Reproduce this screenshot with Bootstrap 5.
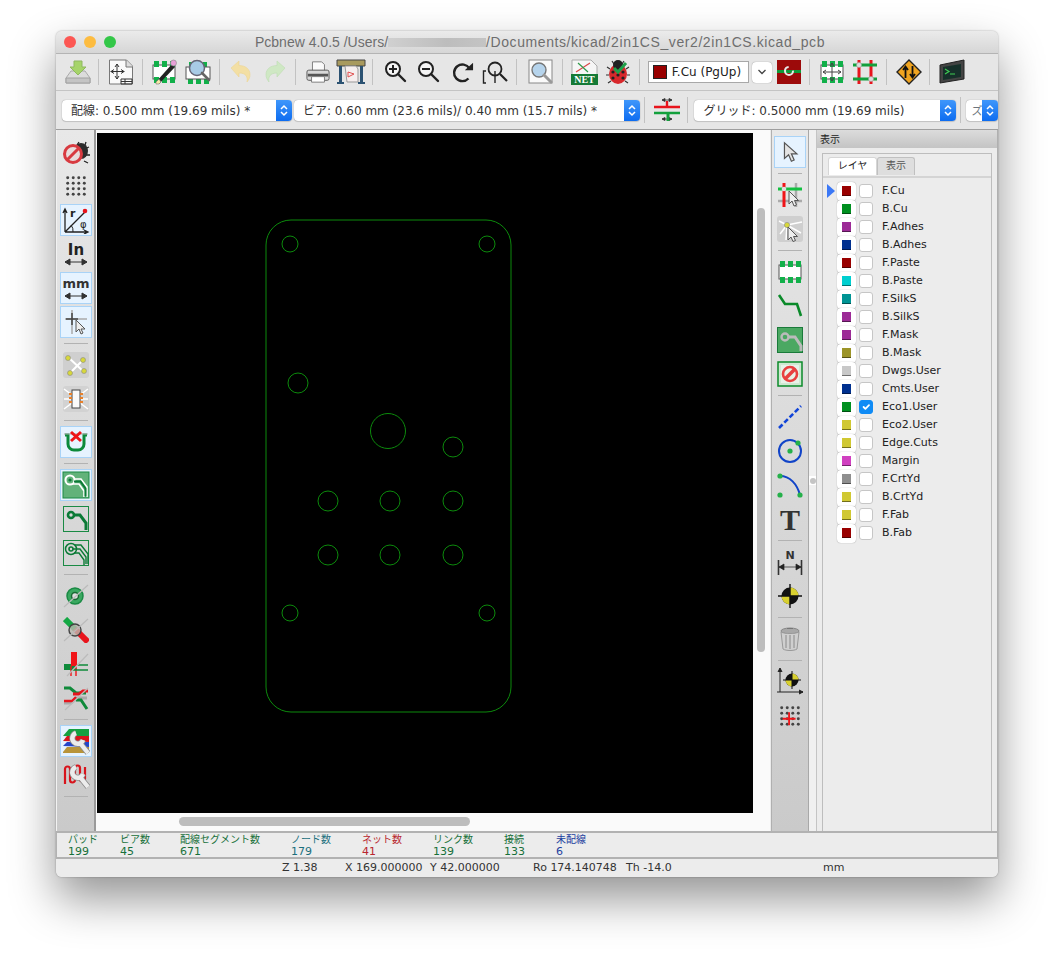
<!DOCTYPE html>
<html lang="ja">
<head>
  <meta charset="UTF-8" />
  <meta name="viewport" content="width=device-width, initial-scale=1.0"/>
  <title>Pcbnew</title>
  <link href="https://cdn.jsdelivr.net/npm/bootstrap@5.3.3/dist/css/bootstrap.min.css" rel="stylesheet">
  <style>
      body {
          background: #fff;
          font-family: "DejaVu Sans", "Noto Sans CJK JP", sans-serif;
          font-size: 11px;
          color: #222;
          min-height: 100vh;
          padding: 31px 0 0 56px;
      }
      .cjk { font-family: "Noto Sans CJK JP", sans-serif; }
      .mac-window {
          width: 942px;
          height: 846px;
          border-radius: 6px;
          overflow: hidden;
          background: #ececec;
          box-shadow: 0 22px 46px rgba(0,0,0,.42), 0 0 2px rgba(0,0,0,.35);
      }
      .titlebar {
          height: 23px;
          background: linear-gradient(#ebebeb, #d6d6d6);
          border-bottom: 1px solid #b4b4b4;
          padding-left: 8px;
      }
      .light { width: 12px; height: 12px; border-radius: 50%; margin-right: 8px; }
      .light-red { background: #fc5753; }
      .light-yellow { background: #fdbc40; }
      .light-green { background: #33c748; }
      .title-text {
          margin-left: 131px;
          padding-top: 1px;
          font-family: "Liberation Sans", sans-serif;
          font-size: 14px;
          color: #6e6e6e;
          white-space: nowrap;
      }
      .title-path { letter-spacing: .58px; }
      .blurred {
          display: inline-block;
          width: 98px; height: 9px;
          background: linear-gradient(90deg, #d0d0d0, #bdbdbd 60%, #c4c4c4);
      }
      .toolbar-main {
          height: 37px;
          background: #e6e6e6;
          border-bottom: 1px solid #c4c4c4;
          padding-left: 5px;
      }
      .toolbar-sub {
          height: 39px;
          background: #e6e6e6;
          border-bottom: 1px solid #9e9e9e;
          padding-left: 6px;
      }
      .tb { width: 33.4px; height: 32px; flex: none; }
      .tb-sep { width: 1px; height: 26px; background: #c2c2c2; margin: 0 5px 0 4px; flex: none; }
      .tb-sep.wide { margin-right: 8px; }
      .tb-sep-v { width: 24px; height: 1px; background: #b2b2b2; margin: 4px auto; flex: none; }
      .mac-select {
          height: 21px;
          background: #fff;
          border-radius: 4px;
          box-shadow: 0 0 1px rgba(0,0,0,.45), 0 1px 1px rgba(0,0,0,.12);
          font-size: 12px;
          color: #333;
          padding-left: 9px;
          flex: none;
          overflow: hidden;
      }
      .mac-select .stepper {
          width: 16px; height: 21px;
          background: linear-gradient(#3f97fb, #0d6cf0);
          flex: none;
      }
      .sel-track { width: 230px; }
      .sel-via { width: 346px; margin-left: 2px; }
      .sel-grid { width: 262px; margin-left: 1px; }
      .sel-zoom { width: 32px; padding-left: 5px; }
      .sel-zoom span:first-child { min-width: 0; overflow: hidden; white-space: nowrap; font-size: 11px; }
      .layer-combo {
          width: 101px; height: 22px;
          background: #fff;
          border: 1px solid #a8a8a8;
          padding-left: 4px;
          font-size: 12px;
          margin-left: 3px;
          flex: none;
          white-space: nowrap;
      }
      .layer-combo i { width: 14px; height: 14px; background: #990000; border: 1px solid #222; margin-right: 5px; flex: none; }
      .chev-btn {
          width: 20px; height: 21px;
          background: #fff;
          border-radius: 4px;
          box-shadow: 0 0 1px rgba(0,0,0,.5);
          margin-left: 3px;
          flex: none;
      }
      .main-area { height: 701px; }
      .side-tools {
          flex: none;
          padding-top: 5px;
          background: linear-gradient(#e8e8e8, #cacaca);
      }
      .side-left { width: 40px; border-right: 2px solid #9a9a9a; border-left: 1px solid #f2f2f2; }
      .side-right { width: 38px; border-left: 1px solid #b0b0b0; border-right: 1px solid #a8a8a8; margin-left: 1px; }
      .vb { height: 34px; flex: none; }
      .vb-on {
          width: 32px; height: 32px;
          background: #e6f3ff;
          border: 1px solid #a9d3f7;
      }
      .canvas-wrap { width: 674px; background: #fafafa; padding: 3px 0 0 1px; flex: none; }
      .canvas-row { height: 680px; }
      .pcb { width: 656px; height: 680px; background: #000; flex: none; }
      .vtrack { flex: 1; padding: 75px 0 0 4px; }
      .vthumb { width: 8px; height: 444px; background: #bdbdbd; border-radius: 4px; }
      .htrack { padding: 4px 0 0 82px; }
      .hthumb { width: 291px; height: 9px; background: #bdbdbd; border-radius: 5px; }
      .sash { width: 7px; background: #f0f0f0; flex: none; padding-top: 346px; }
      .sash span { width: 7px; height: 9px; background: #fff; }
      .sash i { width: 6px; height: 6px; border-radius: 50%; background: #c4c4c4; }
      .layer-panel { width: 182px; border-left: 1px solid #c4c4c4; border-right: 1px solid #b0b0b0; flex: none; }
      .panel-head {
          height: 18px;
          background: linear-gradient(#dcdcdc, #c4c4c4);
          padding-left: 3px;
          font-size: 10px;
          line-height: 18px;
      }
      .panel-box {
          margin: 5px 5px 0;
          border: 1px solid #bdbdbd;
          border-bottom: 0;
          height: 678px;
          background: #ececec;
      }
      .tabs-line { height: 24px; padding: 3px 0 0 5px; border-bottom: 2px solid #d4d4d4; }
      .panel-tab {
          width: 49px; height: 18px;
          background: #fff;
          border: 1px solid #d6d6d6;
          border-bottom: 0;
          border-radius: 3px 3px 0 0;
          font-size: 10px;
          text-align: center;
          line-height: 14px;
      }
      .panel-tab + .panel-tab { width: 38px; background: #dedede; border-color: #c0c0c0; color: #555; }
      .layer-list { padding: 4px 0 0 4px; }
      .layer-row { height: 18px; }
      .layer-arrow { width: 9px; flex: none; }
      .swatch-btn {
          width: 19px; height: 19px;
          background: #fff;
          border-radius: 4px;
          box-shadow: 0 0 1px rgba(0,0,0,.45);
          margin-left: 1px;
          flex: none;
      }
      .swatch-btn i { width: 9px; height: 10px; border-bottom: 1px solid rgba(0,0,0,.45); }
      .c-red { background: #990000; }
      .c-green { background: #009020; }
      .c-purple { background: #9c2a96; }
      .c-navy { background: #00308f; }
      .c-cyan { background: #00cfd0; }
      .c-teal { background: #009494; }
      .c-olive { background: #9c9428; }
      .c-silver { background: #c8c8c8; }
      .c-yellow { background: #d0c832; }
      .c-magenta { background: #d040c0; }
      .c-gray { background: #8f8f8f; }
      .layer-row .form-check-input {
          width: 14px; height: 14px;
          margin: 0 9px 0 3px;
          border-radius: 3px;
          border-color: #c6c6c6;
          flex: none;
      }
      .layer-row .form-check-input:checked { background-color: #0f8bf5; border-color: #0f8bf5; }
      .msg-panel {
          height: 28px;
          border-top: 2px solid #b2b2b2;
          border-bottom: 2px solid #b2b2b2;
          border-left: 1px solid #b2b2b2;
          border-right: 1px solid #b2b2b2;
          background: #ececec;
          padding-left: 11px;
      }
      .msg-label { font-size: 10px; line-height: 12px; height: 12px; display: block; }
      .msg-val { font-size: 11px; line-height: 12px; height: 12px; margin-top: 1px; display: block; }
      .m-green { color: #17703a; }
      .m-teal { color: #1b6f7d; }
      .m-red { color: #b8262f; }
      .m-blue { color: #1d3f9f; }
      .w1 { width: 52px; } .w2 { width: 60px; } .w3 { width: 111px; } .w4 { width: 71px; }
      .w5 { width: 71px; } .w6 { width: 71px; } .w7 { width: 52px; }
      .status-bar { height: 18px; background: #ececec; line-height: 17px; color: #333; white-space: nowrap; }
      .s1 { margin-left: 226px; width: 63px; } .s2 { width: 85px; } .s3 { width: 103px; }
      .s4 { width: 93px; } .s5 { width: 197px; }
  </style>
</head>
<body>

  <svg width="0" height="0" class="d-block position-absolute">
    <defs>
      <symbol id="mag" viewBox="0 0 26 26"><circle cx="11" cy="10" r="7" fill="#fff" fill-opacity=".6" stroke="#222" stroke-width="2"/><path d="M16 15l7 7" stroke="#222" stroke-width="2.4" stroke-linecap="round"/></symbol>
      <symbol id="foot" viewBox="0 0 26 26"><rect x="2" y="6" width="22" height="14" fill="#fff" stroke="#555"/><path fill="#12b04a" d="M3 2h5v6H3zM11 2h5v6h-5zM19 2h5v6h-5zM3 18h5v6H3zM11 18h5v6h-5zM19 18h5v6h-5z"/></symbol>
      <symbol id="dots" viewBox="0 0 26 26"><g fill="#444"><circle cx="4" cy="4" r="1.6"/><circle cx="10" cy="4" r="1.6"/><circle cx="16" cy="4" r="1.6"/><circle cx="22" cy="4" r="1.6"/><circle cx="4" cy="10" r="1.6"/><circle cx="10" cy="10" r="1.6"/><circle cx="16" cy="10" r="1.6"/><circle cx="22" cy="10" r="1.6"/><circle cx="4" cy="16" r="1.6"/><circle cx="10" cy="16" r="1.6"/><circle cx="16" cy="16" r="1.6"/><circle cx="22" cy="16" r="1.6"/><circle cx="4" cy="22" r="1.6"/><circle cx="10" cy="22" r="1.6"/><circle cx="16" cy="22" r="1.6"/><circle cx="22" cy="22" r="1.6"/></g></symbol>
      <symbol id="arrow" viewBox="0 0 26 26"><path d="M7 3v17l4.500-4 3 7 3-1.300-3-6.700h6z" fill="#e4e4e4" stroke="#555" stroke-width="1.300"/></symbol>
      <symbol id="stepper" viewBox="0 0 16 21"><path d="M5 9l3-3 3 3M5 12l3 3 3-3" fill="none" stroke="#fff" stroke-width="1.500"/></symbol>
      <symbol id="ladybug" viewBox="0 0 26 26"><g stroke="#333" stroke-width="1.200"><path d="M5 10l-3-2M4 16H1M6 22l-3 2M21 10l3-2M22 16h3M20 22l3 2M9 5L7 2M17 5l2-3"/></g><ellipse cx="13" cy="15" rx="9" ry="10" fill="#d8282c"/><circle cx="13" cy="6" r="5" fill="#222"/><g fill="#222"><circle cx="8" cy="13" r="1.600"/><circle cx="18" cy="13" r="1.600"/><circle cx="8" cy="19" r="1.600"/><circle cx="18" cy="19" r="1.600"/><circle cx="13" cy="16" r="1.600"/></g></symbol>
      <symbol id="wrench" viewBox="0 0 28 28"><g fill="none"><path d="M14 6a5.500 5.500 0 1 0 7 7M18 16l8 10" stroke="#8c8c8c" stroke-width="6"/><path d="M14 6a5.500 5.500 0 1 0 7 7M18 16l8 10" stroke="#ececec" stroke-width="4.400"/></g></symbol>
    </defs>
  </svg>

  <div class="mac-window d-flex flex-column">

    <!-- title -->
    <div class="titlebar d-flex align-items-center">
      <span class="light light-red"></span>
      <span class="light light-yellow"></span>
      <span class="light light-green"></span>
      <span class="title-text">Pcbnew 4.0.5 /Users/<span class="blurred"></span><span class="title-path">/Documents/kicad/2in1CS_ver2/2in1CS.kicad_pcb</span></span>
    </div>

    <!-- main toolbar -->
    <div class="toolbar-main d-flex align-items-center">
      <div class="tb d-flex align-items-center justify-content-center"><svg width="26" height="26" viewBox="0 0 26 26"><path d="M6 12h14l5 7v5H1v-5z" fill="#dcdcdc" stroke="#aaa"/><path d="M1 19h24v5H1z" fill="#c4c4c4" stroke="#a0a0a0"/><path d="M9 2h8v6h4l-8 8-8-8h4z" fill="#a6d46a" stroke="#8fb860"/></svg></div>
      <div class="tb-sep"></div>
      <div class="tb d-flex align-items-center justify-content-center"><svg width="26" height="26" viewBox="0 0 26 26"><path d="M1.500 1h17l6 6v18h-23z" fill="#fafafa" stroke="#777"/><path d="M18 1v7h7" fill="#ddd" stroke="#777"/><path d="M9 5v15M2.500 12.500h14M9 5l-2 3M9 5l2 3M9 20l-2-3M9 20l2-3M3 12.500l3-2M3 12.500l3 2M16 12.500l-3-2M16 12.500l-3 2" stroke="#333" fill="none"/><path d="M13 20h11v5H13zM13 22.500h11M17 20v5" fill="none" stroke="#333"/></svg></div>
      <div class="tb-sep"></div>
      <div class="tb d-flex align-items-center justify-content-center"><svg width="26" height="26" viewBox="0 0 26 26"><use href="#foot"/><path d="M5 23L21 5l3 3L8 25H5z" fill="#222"/><path d="M5 23l3-3 2 3-2 2H5z" fill="#f5e9a8" stroke="#777" stroke-width=".6"/><circle cx="22.500" cy="4" r="3" fill="#e8a0d8" stroke="#888" stroke-width=".6"/></svg></div>
      <div class="tb d-flex align-items-center justify-content-center"><svg width="26" height="26" viewBox="0 0 26 26"><path fill="#12b04a" d="M4 3h4v5H4zM18 3h4v5h-4zM3 19h5v6H3zM11 19h5v6h-5zM19 19h5v6h-5z"/><rect x="1" y="8" width="24" height="12" fill="#fff" stroke="#555"/><circle cx="12" cy="9" r="7.500" fill="#a8cbe6" stroke="#667" stroke-width="1.500"/><path d="M17 14l7 7" stroke="#666" stroke-width="2.600" stroke-linecap="round"/></svg></div>
      <div class="tb-sep"></div>
      <div class="tb d-flex align-items-center justify-content-center"><svg width="26" height="26" viewBox="0 0 26 26"><path d="M3 9l8-7v4.500c7 0 11 4 11 9 0 3-1 5-3 7.500 1-5-1-9-8-9V18z" fill="#f3dfa4" stroke="#ecd592" stroke-width=".6"/></svg></div>
      <div class="tb d-flex align-items-center justify-content-center"><svg width="26" height="26" viewBox="0 0 26 26"><path d="M23 9l-8-7v4.500c-7 0-11 4-11 9 0 3 1 5 3 7.500-1-5 1-9 8-9V18z" fill="#cfe8c4" stroke="#bedcb2" stroke-width=".6"/></svg></div>
      <div class="tb-sep"></div>
      <div class="tb d-flex align-items-center justify-content-center"><svg width="24" height="24" viewBox="0 0 26 26"><path d="M7 2h10l3 3v7H7z" fill="#fafafa" stroke="#777"/><path d="M3 11h20a2 2 0 0 1 2 2v7a2 2 0 0 1-2 2H3a2 2 0 0 1-2-2v-7a2 2 0 0 1 2-2z" fill="#d8d8d8" stroke="#555"/><path d="M2 15h22v3H2z" fill="#555"/><path d="M6 18h14v6H6z" fill="#fff" stroke="#777"/></svg></div>
      <div class="tb d-flex align-items-center justify-content-center"><svg width="30" height="26" viewBox="0 0 30 26"><path d="M1 1h28v6H1z" fill="#a89a5e" stroke="#444"/><path d="M3 7h3v16H3zM24 7h3v16h-3zM1 23h7v2H1zM22 23h7v2h-7z" fill="#2b5272"/><path d="M9 7h11l2 3v13H11z" fill="#f6eeee" stroke="#999"/><path d="M12 13l6 2-6 3z" fill="none" stroke="#e05050"/></svg></div>
      <div class="tb-sep"></div>
      <div class="tb d-flex align-items-center justify-content-center"><svg width="26" height="26" viewBox="0 0 26 26"><use href="#mag"/><path d="M7 10h8M11 6v8" stroke="#222" stroke-width="2"/></svg></div>
      <div class="tb d-flex align-items-center justify-content-center"><svg width="26" height="26" viewBox="0 0 26 26"><use href="#mag"/><path d="M7 10h8" stroke="#222" stroke-width="2"/></svg></div>
      <div class="tb d-flex align-items-center justify-content-center"><svg width="24" height="24" viewBox="0 0 26 26"><path d="M20 20a9 9 0 1 1 1-11" fill="none" stroke="#222" stroke-width="2.600"/><path d="M16 11h9V3z" fill="#222"/></svg></div>
      <div class="tb d-flex align-items-center justify-content-center"><svg width="26" height="26" viewBox="0 0 26 26"><circle cx="13" cy="10" r="6.500" fill="none" stroke="#222" stroke-width="1.800"/><path d="M18 15l7 7" stroke="#222" stroke-width="2.200"/><path d="M4 12H1.500v12H4M13 12v12" fill="none" stroke="#222" stroke-width="1.400"/></svg></div>
      <div class="tb-sep wide"></div>
      <div class="tb d-flex align-items-center justify-content-center"><svg width="26" height="26" viewBox="0 0 26 26"><rect x="1" y="1" width="23" height="23" fill="#fafafa" stroke="#888"/><circle cx="11" cy="11" r="7" fill="#b6d4ec" stroke="#777" stroke-width="1.400"/><path d="M16 16l7 7" stroke="#999" stroke-width="3" stroke-linecap="round"/></svg></div>
      <div class="tb-sep"></div>
      <div class="tb d-flex align-items-center justify-content-center"><svg width="27" height="26" viewBox="0 0 27 26"><path d="M1 1h19l6 6v9H1z" fill="#f6f6f6" stroke="#aaa"/><path d="M5 13L19 4" stroke="#d84848" stroke-width="1.200"/><path d="M7 4l10 9" stroke="#2f9a4a" stroke-width="1.200"/><rect y="15" width="27" height="11" fill="#157a36"/><text x="13.500" y="24" font-family="Liberation Serif, serif" font-weight="700" font-size="10" fill="#fff" text-anchor="middle">NET</text></svg></div>
      <div class="tb d-flex align-items-center justify-content-center"><svg width="26" height="26" viewBox="0 0 26 26"><use href="#ladybug"/><path d="M9 9l4 4 8-9" fill="none" stroke="#1fa04a" stroke-width="3"/></svg></div>
      <div class="tb-sep"></div>
      <div class="layer-combo d-flex align-items-center"><i></i>F.Cu (PgUp)</div>
      <div class="chev-btn d-flex align-items-center justify-content-center"><svg width="10" height="8" viewBox="0 0 10 8"><path d="M1.500 2l3.500 3.500L8.500 2" fill="none" stroke="#444" stroke-width="1.300"/></svg></div>
      <div class="tb d-flex align-items-center justify-content-center"><svg width="24" height="24" viewBox="0 0 24 24"><rect width="24" height="24" fill="#9c0a0a"/><path d="M0 10h24v3H0z" fill="#0f9a3a"/><circle cx="12" cy="11" r="4" fill="none" stroke="#e8e8e8" stroke-width="2" stroke-dasharray="18 6"/></svg></div>
      <div class="tb-sep"></div>
      <div class="tb d-flex align-items-center justify-content-center"><svg width="26" height="26" viewBox="0 0 26 26"><use href="#foot"/><path d="M4 13h18M13 4v18M4 13l3-2M4 13l3 2M22 13l-3-2M22 13l-3 2M13 4l-2 3M13 4l2 3M13 22l-2-3M13 22l2-3" stroke="#444" fill="none"/></svg></div>
      <div class="tb d-flex align-items-center justify-content-center"><svg width="26" height="26" viewBox="0 0 26 26"><path d="M7 1v24M19 1v24" stroke="#e8141c" stroke-width="3"/><path d="M1 6h24M1 20h24" stroke="#13a03c" stroke-width="3"/><circle cx="7" cy="6" r="2.500" fill="#ddd" stroke="#999" stroke-width=".5"/><circle cx="19" cy="20" r="2.500" fill="#ddd" stroke="#999" stroke-width=".5"/></svg></div>
      <div class="tb-sep"></div>
      <div class="tb d-flex align-items-center justify-content-center"><svg width="26" height="26" viewBox="0 0 26 26"><path d="M13 1l12 12-12 12L1 13z" fill="#f0a420" stroke="#222" stroke-width="1.400"/><path d="M9.500 19V9M7 11l2.500-3.500L12 11M16.500 7v10M14 15l2.500 3.500L19 15" fill="none" stroke="#111" stroke-width="1.800"/></svg></div>
      <div class="tb-sep"></div>
      <div class="tb d-flex align-items-center justify-content-center"><svg width="26" height="26" viewBox="0 0 26 26"><path d="M1 6l24-5v19L1 24z" fill="#444" stroke="#222"/><path d="M4 8l18-3v13L4 21z" fill="#16302a"/><path d="M6 10l4 2.500L6 15" fill="none" stroke="#3ecb52" stroke-width="1.200"/><path d="M11 15h5" stroke="#3ecb52" stroke-width="1.200"/></svg></div>
    </div>

    <!-- sub toolbar -->
    <div class="toolbar-sub d-flex align-items-center">
      <div class="mac-select sel-track d-flex align-items-center justify-content-between"><span><span class="cjk">配線</span>: 0.500 mm (19.69 mils) *</span><span class="stepper d-flex"><svg width="16" height="21"><use href="#stepper"/></svg></span></div>
      <div class="mac-select sel-via d-flex align-items-center justify-content-between"><span><span class="cjk">ビア</span>: 0.60 mm (23.6 mils)/ 0.40 mm (15.7 mils) *</span><span class="stepper d-flex"><svg width="16" height="21"><use href="#stepper"/></svg></span></div>
      <div class="tb-sep ms-1"></div>
      <div class="tb d-flex align-items-center justify-content-center"><svg width="26" height="26" viewBox="0 0 26 26"><path d="M8 3h10M8 3l3-1.500v3zM18 3l-3-1.500v3zM8 22h10M8 22l3-1.500v3zM18 22l-3-1.500v3z" fill="#333" stroke="#333" stroke-width=".8"/><path d="M0 10h26" stroke="#e8141c" stroke-width="2.400"/><path d="M13 10V4" stroke="#e8141c" stroke-width="2.400"/><path d="M0 16h26" stroke="#13a03c" stroke-width="2.400"/><path d="M14 16v8" stroke="#13a03c" stroke-width="3"/></svg></div>
      <div class="tb-sep"></div>
      <div class="mac-select sel-grid d-flex align-items-center justify-content-between"><span><span class="cjk">グリッド</span>: 0.5000 mm (19.69 mils)</span><span class="stepper d-flex"><svg width="16" height="21"><use href="#stepper"/></svg></span></div>
      <div class="tb-sep ms-1"></div>
      <div class="mac-select sel-zoom d-flex align-items-center justify-content-between"><span class="cjk text-secondary">ズ</span><span class="stepper d-flex"><svg width="16" height="21"><use href="#stepper"/></svg></span></div>
    </div>

    <div class="main-area d-flex">
      <!-- left tools -->
      <div class="side-tools side-left d-flex flex-column align-items-center">
        <div class="vb d-flex align-items-center justify-content-center"><svg width="28" height="26" viewBox="0 0 28 26"><g stroke="#222" stroke-width="1.300"><path d="M17 3l-2 3M24 3l-1 3M22 10l5-2M24 16h4M22 22l4 2"/></g><ellipse cx="19" cy="12" rx="7" ry="8" fill="#2b2b2b"/><circle cx="11" cy="15" r="8.500" fill="#e8dcdc" stroke="#d83a40" stroke-width="3"/><path d="M5 21L17 9" stroke="#d83a40" stroke-width="3"/></svg></div>
        <div class="vb d-flex align-items-center justify-content-center"><svg width="24" height="24"><use href="#dots"/></svg></div>
        <div class="vb d-flex align-items-center justify-content-center"><div class="vb-on d-flex align-items-center justify-content-center"><svg width="28" height="28" viewBox="0 0 28 28"><path d="M3 26V4M1 7l2-4 2 4M3 26h22M22 24l4 2-4 2M3 26L23 6" fill="none" stroke="#222" stroke-width="1.300"/><circle cx="23" cy="5" r="2.300" fill="#e8141c"/><path d="M11 26a9 9 0 0 0-2-7" fill="none" stroke="#222"/><text x="8" y="11" font-family="DejaVu Sans, sans-serif" font-weight="700" font-size="11" fill="#222">r</text><text x="18" y="22" font-family="DejaVu Sans, sans-serif" font-size="10" fill="#222">φ</text></svg></div></div>
        <div class="vb d-flex align-items-center justify-content-center"><svg width="26" height="28" viewBox="0 0 26 28"><text x="13" y="15" font-family="DejaVu Sans, sans-serif" font-weight="700" font-size="15" fill="#222" text-anchor="middle">In</text><path d="M2 22h22M2 22l5-3v6zM24 22l-5-3v6z" fill="#333" stroke="#333"/></svg></div>
        <div class="vb d-flex align-items-center justify-content-center"><div class="vb-on d-flex align-items-center justify-content-center"><svg width="28" height="28" viewBox="0 0 28 28"><text x="14" y="14" font-family="DejaVu Sans, sans-serif" font-weight="700" font-size="13" fill="#333" text-anchor="middle">mm</text><path d="M3 22h22M3 22l5-3v6zM25 22l-5-3v6z" fill="#333" stroke="#333"/></svg></div></div>
        <div class="vb d-flex align-items-center justify-content-center"><div class="vb-on d-flex align-items-center justify-content-center"><svg width="26" height="26" viewBox="0 0 26 26"><path d="M2 10h22M9 1v24" stroke="#aaa" stroke-width="1.500"/><path d="M3 10h12M9 4v12" stroke="#444" stroke-width="1.500"/><path d="M13 11v12l3-3 2 5 2-1-2-4h4z" fill="#eee" stroke="#555"/></svg></div></div>
        <div class="tb-sep-v"></div>
        <div class="vb d-flex align-items-center justify-content-center"><svg width="26" height="26" viewBox="0 0 26 26"><rect width="26" height="26" rx="3" fill="#cfcfcf"/><path d="M5 5l16 15M21 7L7 21" stroke="#fff" stroke-width="2"/><g fill="#d8d83a" stroke="#888" stroke-width=".6"><circle cx="5" cy="6" r="2.500"/><circle cx="20" cy="8" r="2.500"/><circle cx="7" cy="21" r="2.500"/><circle cx="21" cy="19" r="2.500"/></g></svg></div>
        <div class="vb d-flex align-items-center justify-content-center"><svg width="26" height="26" viewBox="0 0 26 26"><rect width="26" height="26" rx="3" fill="#d2d2d2"/><path d="M1 3l8 6M25 3l-8 6M1 23l8-6M25 23l-8-6M1 13h7M18 13h7" stroke="#fff" stroke-width="1.500"/><rect x="9" y="4" width="8" height="18" fill="#fafafa" stroke="#444"/><path fill="#e8802a" d="M6 7h3v2H6zM6 11h3v2H6zM6 15h3v2H6zM17 7h3v2h-3zM17 11h3v2h-3zM17 15h3v2h-3z"/></svg></div>
        <div class="tb-sep-v"></div>
        <div class="vb d-flex align-items-center justify-content-center"><div class="vb-on d-flex align-items-center justify-content-center"><svg width="26" height="26" viewBox="0 0 26 26"><path d="M2 6h3v9a6 6 0 0 0 6 6h4a6 6 0 0 0 6-6V6h3" fill="none" stroke="#0b8a3a" stroke-width="3"/><path d="M1 5h24" stroke="#aaa"/><path d="M8 3l10 9M18 3L8 12" stroke="#ee1418" stroke-width="3"/></svg></div></div>
        <div class="tb-sep-v"></div>
        <div class="vb d-flex align-items-center justify-content-center"><div class="vb-on d-flex align-items-center justify-content-center"><svg width="28" height="28" viewBox="0 0 28 28"><rect x="1" y="1" width="26" height="26" fill="#62b27a" stroke="#1a8a44"/><circle cx="8" cy="9" r="4.500" fill="none" stroke="#fff" stroke-width="2"/><path d="M12 8h7l6 8v10M10 13h7l5 7v6" fill="none" stroke="#fff" stroke-width="1.600"/><circle cx="8" cy="9" r="1.600" fill="#0b7a36"/><path d="M12 10.500h6.500l5 7v8" fill="none" stroke="#0b7a36" stroke-width="2"/></svg></div></div>
        <div class="vb d-flex align-items-center justify-content-center"><svg width="26" height="26" viewBox="0 0 26 26"><rect x=".5" y=".5" width="25" height="25" fill="none" stroke="#1a8a44"/><circle cx="8" cy="9" r="3" fill="none" stroke="#0b7a36" stroke-width="2.600"/><path d="M11 9h6l6 8v7" fill="none" stroke="#0b7a36" stroke-width="3"/></svg></div>
        <div class="vb d-flex align-items-center justify-content-center"><svg width="26" height="26" viewBox="0 0 26 26"><rect x=".5" y=".5" width="25" height="25" fill="none" stroke="#1a8a44"/><circle cx="8" cy="9" r="5.500" fill="none" stroke="#0b7a36" stroke-width="1.500"/><circle cx="8" cy="9" r="2" fill="none" stroke="#0b7a36" stroke-width="1.600"/><path d="M12 5h6l7 9v10M11 13h5l5 7v5M10 9h7l6 8v7" fill="none" stroke="#0b7a36" stroke-width="1.400"/></svg></div>
        <div class="tb-sep-v"></div>
        <div class="vb d-flex align-items-center justify-content-center"><svg width="26" height="26" viewBox="0 0 26 26"><circle cx="12" cy="13" r="8" fill="#3aa860" stroke="#1a8a44" stroke-width="1.500"/><circle cx="12" cy="13" r="3.500" fill="#ddd" stroke="#1a6a34" stroke-width="1.500"/><path d="M1 24L25 2" stroke="#bbb" stroke-width="1.200"/></svg></div>
        <div class="vb d-flex align-items-center justify-content-center"><svg width="26" height="26" viewBox="0 0 26 26"><path d="M2 2l10 10" stroke="#14a844" stroke-width="6"/><path d="M12 12l13 13" stroke="#e8141c" stroke-width="6"/><circle cx="12" cy="13" r="6" fill="#bcb8b0" fill-opacity=".8" stroke="#444" stroke-width="1.400"/><path d="M1 24L25 2" stroke="#bbb" stroke-width="1.200"/></svg></div>
        <div class="vb d-flex align-items-center justify-content-center"><svg width="26" height="26" viewBox="0 0 26 26"><path d="M8 1h6v12H1v6h13" fill="#0f8a3a"/><path d="M8 1h6v14H8z" fill="#f01418"/><path d="M1 13h7v6H1z" fill="#0f8a3a"/><path d="M8 15v10M13 15v10" stroke="#f01418" stroke-width="1.400"/><path d="M14 14h11M8 19h17" stroke="#0f8a3a" stroke-width="1.400"/><path d="M4 25L25 3" stroke="#bbb" stroke-width="1.200"/></svg></div>
        <div class="vb d-flex align-items-center justify-content-center"><svg width="26" height="26" viewBox="0 0 26 26"><path d="M1 3h6l6 5h10" fill="none" stroke="#0f8a3a" stroke-width="3"/><path d="M10 9h6l4-3h5" fill="none" stroke="#e8141c" stroke-width="3"/><path d="M1 18h7l6-5h10" fill="none" stroke="#aaa" stroke-width="3"/><path d="M1 16h8l4-4" fill="none" stroke="#e8141c" stroke-width="2.400"/><path d="M13 15h5l6 9" fill="none" stroke="#0f8a3a" stroke-width="3"/><path d="M2 25L25 3" stroke="#bbb" stroke-width="1.200"/></svg></div>
        <div class="tb-sep-v"></div>
        <div class="vb d-flex align-items-center justify-content-center"><div class="vb-on d-flex align-items-center justify-content-center"><svg width="28" height="28" viewBox="0 0 28 28"><path d="M1 9L7 2h20v8z" fill="#14a040"/><path d="M1 14l4-5h22v6z" fill="#d8141c"/><path d="M1 19l4-4h22v5z" fill="#2446c8"/><path d="M1 25l4-5h22v6H1z" fill="#b8943a"/><use href="#wrench" width="28" height="28"/></svg></div></div>
        <div class="vb d-flex align-items-center justify-content-center"><svg width="28" height="28" viewBox="0 0 28 28"><path d="M3 23V8a2.500 2.500 0 0 1 5 0v11a2.500 2.500 0 0 0 5 0V7a2.500 2.500 0 0 1 5 0v11a2.500 2.500 0 0 0 5 0V6" fill="none" stroke="#d8141c" stroke-width="2.200"/><use href="#wrench" width="28" height="28"/></svg></div>
        <div class="tb-sep-v"></div>
      </div>

      <!-- canvas -->
      <div class="canvas-wrap">
        <div class="canvas-row d-flex">
          <div class="pcb">
            <svg width="656" height="680" viewBox="97 133 656 680" class="d-block">
              <g fill="none" stroke="#0c8a0c" stroke-width="1">
                <rect x="266" y="220" width="245" height="492" rx="25"/>
                <circle cx="290" cy="244" r="8"/>
                <circle cx="487" cy="244" r="8"/>
                <circle cx="298" cy="383" r="10"/>
                <circle cx="388" cy="431" r="17.500"/>
                <circle cx="453" cy="447" r="10"/>
                <circle cx="328" cy="501" r="10"/>
                <circle cx="390" cy="501" r="10"/>
                <circle cx="453" cy="501" r="10"/>
                <circle cx="328" cy="555" r="10"/>
                <circle cx="390" cy="555" r="10"/>
                <circle cx="453" cy="555" r="10"/>
                <circle cx="290" cy="613" r="8"/>
                <circle cx="487" cy="613" r="8"/>
              </g>
            </svg>
          </div>
          <div class="vtrack"><div class="vthumb"></div></div>
        </div>
        <div class="htrack"><div class="hthumb"></div></div>
      </div>

      <!-- right tools -->
      <div class="side-tools side-right d-flex flex-column align-items-center">
        <div class="vb d-flex align-items-center justify-content-center"><div class="vb-on d-flex align-items-center justify-content-center"><svg width="24" height="24"><use href="#arrow"/></svg></div></div>
        <div class="tb-sep-v"></div>
        <div class="vb d-flex align-items-center justify-content-center"><svg width="26" height="26" viewBox="0 0 26 26"><path d="M19 1v24" stroke="#aaa" stroke-width="2.500"/><path d="M1 19h24" stroke="#aaa" stroke-width="2.500"/><path d="M7 1v24" stroke="#f01418" stroke-width="3"/><path d="M1 7h24" stroke="#13c040" stroke-width="3"/><circle cx="7" cy="7" r="2.300" fill="#ddd"/><path d="M12 9v13l3-3 2 5 2.500-1-2-4.500h4z" fill="#eee" stroke="#555"/></svg></div>
        <div class="vb d-flex align-items-center justify-content-center"><svg width="26" height="26" viewBox="0 0 26 26"><rect width="26" height="26" rx="3" fill="#cfcfcf"/><path d="M10 9L2 5M10 9L3 18M10 9l15-3M10 9l14 8M10 9L9 24" stroke="#fff" stroke-width="1.500"/><circle cx="10" cy="9" r="2.600" fill="#d8d83a" stroke="#888" stroke-width=".6"/><path d="M11 11v13l3-3 2 4.500 2.500-1-2-4h4z" fill="#eee" stroke="#555"/></svg></div>
        <div class="tb-sep-v"></div>
        <div class="vb d-flex align-items-center justify-content-center"><svg width="26" height="26" viewBox="0 0 26 26"><use href="#foot"/></svg></div>
        <div class="vb d-flex align-items-center justify-content-center"><svg width="26" height="26" viewBox="0 0 26 26"><path d="M2 2l6 9h12l4 12" fill="none" stroke="#0b8a2a" stroke-width="2.600"/></svg></div>
        <div class="vb d-flex align-items-center justify-content-center"><svg width="26" height="26" viewBox="0 0 26 26"><rect x=".5" y=".5" width="25" height="25" fill="#4ba862" stroke="#1a7a3a"/><circle cx="8" cy="10" r="3.500" fill="none" stroke="#bbb" stroke-width="2.400"/><path d="M12 10h6l6 9v5" fill="none" stroke="#bbb" stroke-width="3"/></svg></div>
        <div class="vb d-flex align-items-center justify-content-center"><svg width="26" height="26" viewBox="0 0 26 26"><rect x="1" y="1" width="24" height="24" fill="#cfe8d2" stroke="#0b8a2a" stroke-width="1.500"/><rect x="4" y="4" width="18" height="18" fill="#e8f2e8"/><circle cx="13" cy="13" r="7" fill="none" stroke="#e84040" stroke-width="2.600"/><path d="M8 18L18 8" stroke="#e84040" stroke-width="3.600"/></svg></div>
        <div class="tb-sep-v"></div>
        <div class="vb d-flex align-items-center justify-content-center"><svg width="26" height="26" viewBox="0 0 26 26"><path d="M2 24L24 2" stroke="#1144d8" stroke-width="2.600" stroke-dasharray="5 2.500"/></svg></div>
        <div class="vb d-flex align-items-center justify-content-center"><svg width="26" height="26" viewBox="0 0 26 26"><circle cx="13" cy="13" r="11" fill="none" stroke="#1144c8" stroke-width="2"/><circle cx="13" cy="13" r="2.600" fill="#25b04a"/><circle cx="21" cy="5" r="2.600" fill="#25b04a"/></svg></div>
        <div class="vb d-flex align-items-center justify-content-center"><svg width="26" height="26" viewBox="0 0 26 26"><path d="M3 4c10 0 17 8 20 19" fill="none" stroke="#1144c8" stroke-width="2"/><circle cx="3" cy="4" r="2.600" fill="#25b04a"/><circle cx="3" cy="23" r="2.600" fill="#25b04a"/><circle cx="23" cy="23" r="2.600" fill="#25b04a"/></svg></div>
        <div class="vb d-flex align-items-center justify-content-center"><svg width="26" height="34" viewBox="0 -4 26 34"><text x="13" y="24" font-family="Liberation Serif, serif" font-weight="700" font-size="30" fill="#333" text-anchor="middle">T</text></svg></div>
        <div class="tb-sep-v"></div>
        <div class="vb d-flex align-items-center justify-content-center"><svg width="26" height="28" viewBox="0 0 26 28"><text x="13" y="11" font-family="DejaVu Sans, sans-serif" font-weight="700" font-size="11" fill="#333" text-anchor="middle">N</text><path d="M1.500 12v15M24.500 12v15" stroke="#333" stroke-width="1.600"/><path d="M2 19h22M2 19l5-3v6zM24 19l-5-3v6z" fill="#222" stroke="#222" stroke-width=".7"/></svg></div>
        <div class="vb d-flex align-items-center justify-content-center"><svg width="26" height="26" viewBox="0 0 26 26"><circle cx="13" cy="13" r="8.500" fill="#111"/><path d="M13 4.500a8.500 8.500 0 0 1 8.500 8.500H13zM13 21.500A8.500 8.500 0 0 1 4.500 13H13z" fill="#d8d030"/><path d="M13 1v24M1 13h24" stroke="#111" stroke-width="1.400"/></svg></div>
        <div class="tb-sep-v"></div>
        <div class="vb d-flex align-items-center justify-content-center"><svg width="24" height="26" viewBox="0 0 24 26"><ellipse cx="12" cy="5" rx="9" ry="3" fill="#a8a8a8" stroke="#888"/><path d="M3 6l2 17c3 2 11 2 14 0l2-17c-4 2-14 2-18 0z" fill="#cfcfcf" stroke="#999"/><path d="M8 9v13M12 9v14M16 9v13" stroke="#8a8a8a"/><path d="M9 3h6v-1H9z" fill="#777"/></svg></div>
        <div class="tb-sep-v"></div>
        <div class="vb d-flex align-items-center justify-content-center"><svg width="28" height="28" viewBox="0 0 28 28"><path d="M4 1v23M2 4l2-4 2 4M1 24h26M23 22l4 2-4 2" fill="#222" stroke="#222" stroke-width="1"/><circle cx="16" cy="12" r="6.500" fill="#111"/><path d="M16 5.500a6.500 6.500 0 0 1 6.500 6.500H16zM16 18.500A6.500 6.500 0 0 1 9.500 12H16z" fill="#d8d030"/><path d="M16 3v18M7 12h18" stroke="#111"/></svg></div>
        <div class="vb d-flex align-items-center justify-content-center"><svg width="24" height="24" viewBox="0 0 26 26"><use href="#dots"/><path d="M5 16h14M12 9v14" stroke="#f01418" stroke-width="2"/></svg></div>
      </div>

      <div class="sash d-flex flex-column"><span class="d-flex align-items-center justify-content-center"><i></i></span></div>

      <!-- layers -->
      <div class="layer-panel">
        <div class="panel-head cjk">表示</div>
        <div class="panel-box">
          <div class="tabs-line d-flex cjk">
            <div class="panel-tab">レイヤ</div>
            <div class="panel-tab">表示</div>
          </div>
          <div class="layer-list">
            <div class="layer-row d-flex align-items-center"><span class="layer-arrow"><svg width="8" height="14" class="d-block"><path d="M0 0l8 7-8 7z" fill="#3b78f6"/></svg></span><span class="swatch-btn d-flex align-items-center justify-content-center"><i class="c-red"></i></span><input class="form-check-input" type="checkbox"><span>F.Cu</span></div>
            <div class="layer-row d-flex align-items-center"><span class="layer-arrow"></span><span class="swatch-btn d-flex align-items-center justify-content-center"><i class="c-green"></i></span><input class="form-check-input" type="checkbox"><span>B.Cu</span></div>
            <div class="layer-row d-flex align-items-center"><span class="layer-arrow"></span><span class="swatch-btn d-flex align-items-center justify-content-center"><i class="c-purple"></i></span><input class="form-check-input" type="checkbox"><span>F.Adhes</span></div>
            <div class="layer-row d-flex align-items-center"><span class="layer-arrow"></span><span class="swatch-btn d-flex align-items-center justify-content-center"><i class="c-navy"></i></span><input class="form-check-input" type="checkbox"><span>B.Adhes</span></div>
            <div class="layer-row d-flex align-items-center"><span class="layer-arrow"></span><span class="swatch-btn d-flex align-items-center justify-content-center"><i class="c-red"></i></span><input class="form-check-input" type="checkbox"><span>F.Paste</span></div>
            <div class="layer-row d-flex align-items-center"><span class="layer-arrow"></span><span class="swatch-btn d-flex align-items-center justify-content-center"><i class="c-cyan"></i></span><input class="form-check-input" type="checkbox"><span>B.Paste</span></div>
            <div class="layer-row d-flex align-items-center"><span class="layer-arrow"></span><span class="swatch-btn d-flex align-items-center justify-content-center"><i class="c-teal"></i></span><input class="form-check-input" type="checkbox"><span>F.SilkS</span></div>
            <div class="layer-row d-flex align-items-center"><span class="layer-arrow"></span><span class="swatch-btn d-flex align-items-center justify-content-center"><i class="c-purple"></i></span><input class="form-check-input" type="checkbox"><span>B.SilkS</span></div>
            <div class="layer-row d-flex align-items-center"><span class="layer-arrow"></span><span class="swatch-btn d-flex align-items-center justify-content-center"><i class="c-purple"></i></span><input class="form-check-input" type="checkbox"><span>F.Mask</span></div>
            <div class="layer-row d-flex align-items-center"><span class="layer-arrow"></span><span class="swatch-btn d-flex align-items-center justify-content-center"><i class="c-olive"></i></span><input class="form-check-input" type="checkbox"><span>B.Mask</span></div>
            <div class="layer-row d-flex align-items-center"><span class="layer-arrow"></span><span class="swatch-btn d-flex align-items-center justify-content-center"><i class="c-silver"></i></span><input class="form-check-input" type="checkbox"><span>Dwgs.User</span></div>
            <div class="layer-row d-flex align-items-center"><span class="layer-arrow"></span><span class="swatch-btn d-flex align-items-center justify-content-center"><i class="c-navy"></i></span><input class="form-check-input" type="checkbox"><span>Cmts.User</span></div>
            <div class="layer-row d-flex align-items-center"><span class="layer-arrow"></span><span class="swatch-btn d-flex align-items-center justify-content-center"><i class="c-green"></i></span><input class="form-check-input" type="checkbox" checked><span>Eco1.User</span></div>
            <div class="layer-row d-flex align-items-center"><span class="layer-arrow"></span><span class="swatch-btn d-flex align-items-center justify-content-center"><i class="c-yellow"></i></span><input class="form-check-input" type="checkbox"><span>Eco2.User</span></div>
            <div class="layer-row d-flex align-items-center"><span class="layer-arrow"></span><span class="swatch-btn d-flex align-items-center justify-content-center"><i class="c-yellow"></i></span><input class="form-check-input" type="checkbox"><span>Edge.Cuts</span></div>
            <div class="layer-row d-flex align-items-center"><span class="layer-arrow"></span><span class="swatch-btn d-flex align-items-center justify-content-center"><i class="c-magenta"></i></span><input class="form-check-input" type="checkbox"><span>Margin</span></div>
            <div class="layer-row d-flex align-items-center"><span class="layer-arrow"></span><span class="swatch-btn d-flex align-items-center justify-content-center"><i class="c-gray"></i></span><input class="form-check-input" type="checkbox"><span>F.CrtYd</span></div>
            <div class="layer-row d-flex align-items-center"><span class="layer-arrow"></span><span class="swatch-btn d-flex align-items-center justify-content-center"><i class="c-yellow"></i></span><input class="form-check-input" type="checkbox"><span>B.CrtYd</span></div>
            <div class="layer-row d-flex align-items-center"><span class="layer-arrow"></span><span class="swatch-btn d-flex align-items-center justify-content-center"><i class="c-yellow"></i></span><input class="form-check-input" type="checkbox"><span>F.Fab</span></div>
            <div class="layer-row d-flex align-items-center"><span class="layer-arrow"></span><span class="swatch-btn d-flex align-items-center justify-content-center"><i class="c-red"></i></span><input class="form-check-input" type="checkbox"><span>B.Fab</span></div>
          </div>
        </div>
      </div>
    </div>

    <!-- message panel -->
    <div class="msg-panel d-flex">
      <div class="w1 m-green"><span class="msg-label cjk">パッド</span><span class="msg-val">199</span></div>
      <div class="w2 m-green"><span class="msg-label cjk">ビア数</span><span class="msg-val">45</span></div>
      <div class="w3 m-green"><span class="msg-label cjk">配線セグメント数</span><span class="msg-val">671</span></div>
      <div class="w4 m-teal"><span class="msg-label cjk">ノード数</span><span class="msg-val">179</span></div>
      <div class="w5 m-red"><span class="msg-label cjk">ネット数</span><span class="msg-val">41</span></div>
      <div class="w6 m-green"><span class="msg-label cjk">リンク数</span><span class="msg-val">139</span></div>
      <div class="w7 m-green"><span class="msg-label cjk">接続</span><span class="msg-val">133</span></div>
      <div class="m-blue"><span class="msg-label cjk">未配線</span><span class="msg-val">6</span></div>
    </div>

    <!-- status -->
    <div class="status-bar d-flex">
      <span class="s1">Z 1.38</span>
      <span class="s2">X 169.000000</span>
      <span class="s3">Y 42.000000</span>
      <span class="s4">Ro 174.140748</span>
      <span class="s5">Th -14.0</span>
      <span>mm</span>
    </div>
  </div>

  <script src="https://cdn.jsdelivr.net/npm/bootstrap@5.3.3/dist/js/bootstrap.bundle.min.js"></script>
</body>
</html>
